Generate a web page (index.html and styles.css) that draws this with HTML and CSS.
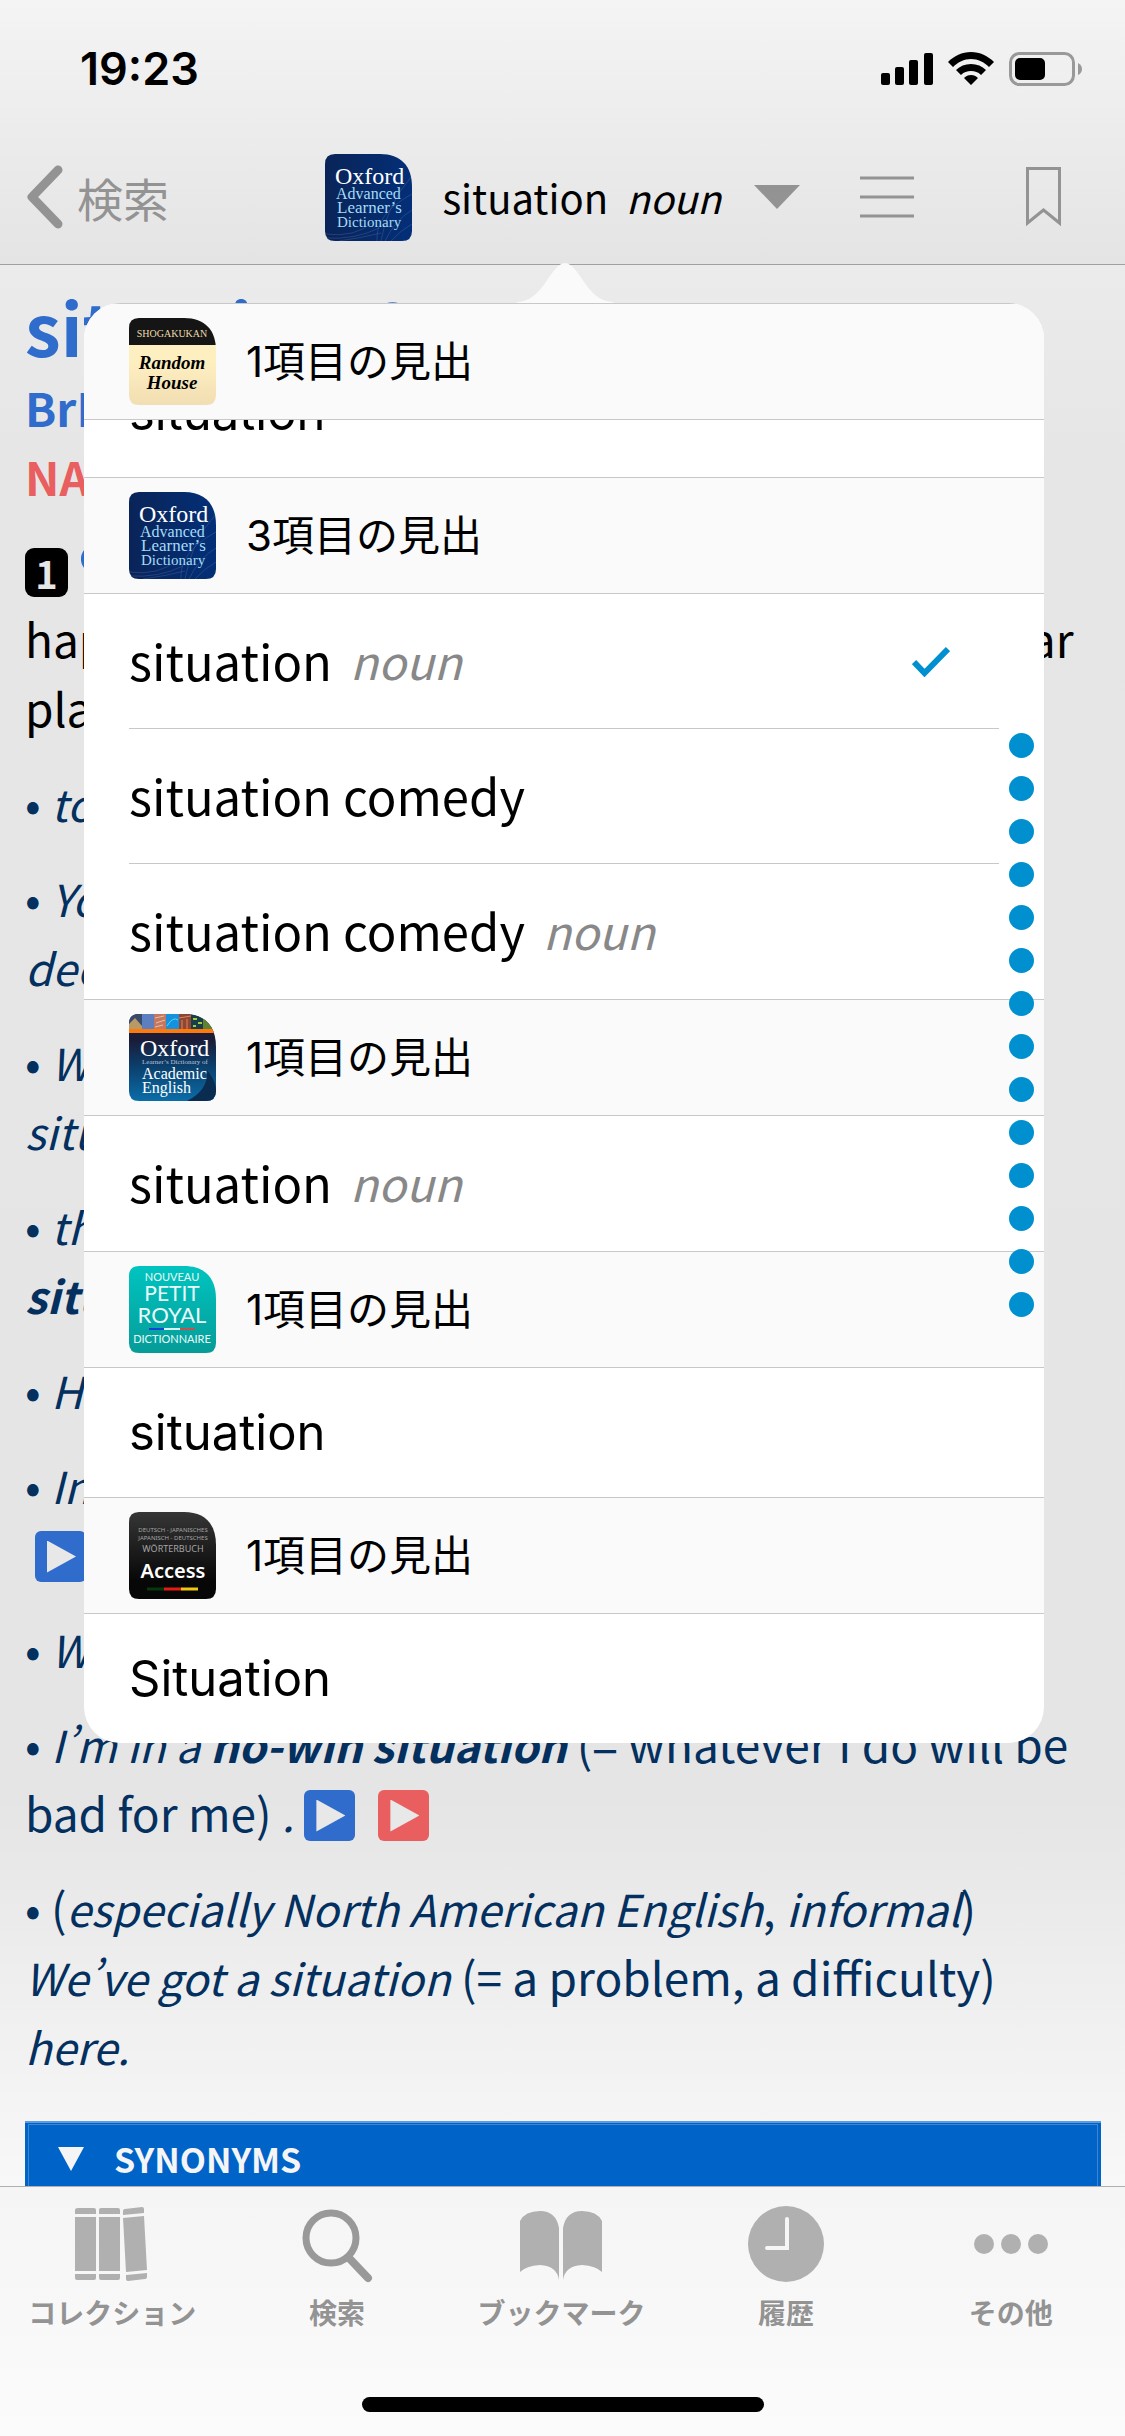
FILE: index.html
```html
<!DOCTYPE html>
<html lang="ja">
<head>
<meta charset="utf-8">
<meta name="viewport" content="width=device-width, initial-scale=1">
<title>situation</title>
<link rel="stylesheet" href="styles.css">
</head>
<body>
<svg class="defs" width="0" height="0" aria-hidden="true">
  <defs>
    <linearGradient id="g-oald" x1="0" y1="0" x2="1" y2="0"><stop offset="0" stop-color="#0a2458"/><stop offset="1" stop-color="#032f78"/></linearGradient>
    <linearGradient id="g-cream" x1="0" y1="0" x2="0" y2="1"><stop offset="0.5" stop-color="#feefc1"/><stop offset="1" stop-color="#f1deb2"/></linearGradient>
    <linearGradient id="g-acad" x1="0" y1="0" x2="0" y2="1"><stop offset="0.3" stop-color="#1a1c38"/><stop offset="0.6" stop-color="#0b3f6c"/><stop offset="1" stop-color="#0b6da8"/></linearGradient>
    <linearGradient id="g-teal" x1="0" y1="0" x2="0" y2="1"><stop offset="0" stop-color="#00c4c0"/><stop offset="1" stop-color="#069c98"/></linearGradient>
    <linearGradient id="g-dark" x1="0" y1="0" x2="0" y2="1"><stop offset="0" stop-color="#363636"/><stop offset="0.8" stop-color="#070707"/></linearGradient>
    <clipPath id="book"><path d="M10 0H55C76 0 87 12 87 33V77Q87 87 77 87H10Q0 87 0 77V10Q0 0 10 0Z"/></clipPath>
    <symbol id="oald" viewBox="0 0 87 87">
      <g clip-path="url(#book)">
        <rect width="87" height="87" fill="url(#g-oald)"/>
        <path d="M56 87Q62 50 87 22M52 87Q50 60 87 40M60 87Q70 66 87 56M66 87Q76 76 87 70M0 80Q30 84 48 68M0 84Q30 86 54 74M14 87Q36 84 56 79" fill="none" stroke="#5676b4" stroke-opacity="0.35"/>
        <g font-family="Liberation Serif, serif">
          <text x="10" y="30" font-size="24" fill="#fff">Oxford</text>
          <g fill="#a5dcf5"><text x="11" y="45" font-size="16">Advanced</text><text x="12" y="59" font-size="17">Learner’s</text><text x="12" y="73" font-size="15">Dictionary</text></g>
        </g>
      </g>
    </symbol>
    <symbol id="key" viewBox="0 0 58 28">
      <path fill="#2f6ccc" fill-rule="evenodd" d="M14 0A14 14 0 1 0 27 19H38V26H44V19H49V26H55V10H27A14 14 0 0 0 14 0ZM14 9A5 5 0 1 1 14 19A5 5 0 1 1 14 9Z"/>
    </symbol>
  </defs>
</svg>

<div class="app">
  <header class="top">
    <div class="status">
      <span class="clock">19:23</span>
      <span class="signals">
        <svg width="52" height="34" viewBox="0 0 52 34"><rect y="21" width="9" height="12" rx="2"/><rect x="14" y="15" width="9" height="18" rx="2"/><rect x="28" y="8" width="9" height="25" rx="2"/><rect x="43" y="1" width="9" height="32" rx="2"/></svg>
        <svg width="46" height="34" viewBox="0 0 46 34"><path d="M23 0C32 0 40 4 46 10L41 15C36 10 30 7 23 7S10 10 5 15L0 10C6 4 14 0 23 0ZM23 12C29 12 34 14 38 18L33 23C30 20 27 19 23 19S16 20 13 23L8 18C12 14 17 12 23 12ZM23 23C26 23 28 24 30 26L23 33L16 26C18 24 20 23 23 23Z"/></svg>
        <svg width="74" height="34" viewBox="0 0 74 34"><rect x="1.500" y="1.500" width="63" height="31" rx="9" fill="none" stroke="#999" stroke-width="3"/><rect x="6" y="6" width="30" height="22" rx="5"/><path d="M69 11Q73 13 73 17T69 23Z" fill="#999"/></svg>
      </span>
    </div>
    <nav class="bar">
      <a class="back" href="#search"><svg width="37" height="64" viewBox="0 0 37 64"><path d="M32 5L6 32L32 59" fill="none" stroke="#939393" stroke-width="9" stroke-linecap="round" stroke-linejoin="round"/></svg><span>検索</span></a>
      <button class="heading" type="button">
        <svg class="dict" width="87" height="87"><use href="#oald"/></svg>
        <span class="word">situation</span><i class="pos">noun</i>
        <svg class="tri" width="46" height="24" viewBox="0 0 46 24"><path d="M0 0H46L23 24Z" fill="#939393"/></svg>
      </button>
      <button class="menu" type="button" aria-label="目次"><svg width="54" height="42" viewBox="0 0 54 42"><path d="M0 2H54M0 21H54M0 40H54" stroke="#939393" stroke-width="3"/></svg></button>
      <button class="mark" type="button" aria-label="ブックマークに追加"><svg width="35" height="60" viewBox="0 0 35 60"><path d="M1.500 1.500H33.500V56L17.500 43L1.500 56Z" fill="none" stroke="#939393" stroke-width="3"/></svg></button>
    </nav>
  </header>

  <main class="content">
    <article class="entry">
      <h1>situation <svg width="82" height="40"><use href="#key"/></svg></h1>
      <p class="uk">BrE</p>
      <p class="us">NAmE</p>
      <p class="sense"><span class="num">1</span><svg width="58" height="28"><use href="#key"/></svg> all the circumstances and things that are<br>happening at a particular time and in a particular<br>place</p>
      <p class="ex">• <i>to be in the same situation</i></p>
      <p class="ex">• <i>You could get into a situation where you have to<br>decide immediately.</i></p>
      <p class="ex">• <i>We have all been in similar embarrassing<br>situations.</i></p>
      <p class="ex">• <i>the present economic/political<br><b>situation</b></i></p>
      <p class="ex">• <i>He could see no way out of the situation.</i></p>
      <p class="ex">• <i>In your situation, I would look for another job.</i><br><button class="play uk-play first" type="button" aria-label="BrE"></button></p>
      <p class="ex">• <i>What we have here is a crisis situation.</i></p>
      <p class="ex">• <i>I’m in a <b>no-win situation</b></i> (= whatever I do will be<br>bad for me) <i>.</i> <button class="play uk-play" type="button" aria-label="BrE"></button><button class="play us-play" type="button" aria-label="NAmE"></button></p>
      <p class="ex">• (<i>especially North American English</i>, <i>informal</i>)<br><i>We’ve got a situation</i> (= a problem, a difficulty)<br><i>here.</i></p>
      <button class="synonyms" type="button"><svg width="26" height="24" viewBox="0 0 26 24"><path d="M0 0H26L13 24Z" fill="#f5f5f5"/></svg>SYNONYMS</button>
    </article>

    <section class="popover">
      <svg class="arrow" width="96" height="40" viewBox="0 0 96 40"><path d="M0 39C26 39 34 0 48 0S70 39 96 39V40H0Z" fill="#fafafa"/></svg>
      <div class="list">
        <h2><svg class="dict" width="87" height="87" viewBox="0 0 87 87"><g clip-path="url(#book)"><rect width="87" height="87" fill="url(#g-cream)"/><rect width="87" height="27" fill="#151515"/><g font-family="Liberation Serif, serif" text-anchor="middle"><text x="43" y="19" font-size="10" fill="#eedcae">SHOGAKUKAN</text><g font-size="19" font-weight="700" font-style="italic"><text x="43" y="51">Random</text><text x="43" y="71">House</text></g></g></g></svg><span>1項目の見出</span></h2>
        <a class="row sys scrolled" href="#rh">situation</a>
        <h2><svg class="dict" width="87" height="87"><use href="#oald"/></svg><span>3項目の見出</span></h2>
        <a class="row inset" href="#o1">situation<i>noun</i><svg class="check" width="38" height="31" viewBox="0 0 38 31"><path d="M2 16L12.500 27L36 3" fill="none" stroke="#0090d0" stroke-width="6"/></svg></a>
        <a class="row inset" href="#o2">situation comedy</a>
        <a class="row" href="#o3">situation comedy<i>noun</i></a>
        <h2><svg class="dict" width="87" height="87" viewBox="0 0 87 87"><g clip-path="url(#book)"><rect width="87" height="87" fill="url(#g-acad)"/><path d="M58 87Q80 76 78 56Q90 70 87 87Z" fill="#0a2c50"/><rect width="13" height="15" fill="#3a4a6c"/><path d="M0 15V10L6 4L13 12V15Z" fill="#b99a67"/><rect x="13" width="12" height="15" fill="#5d7fc0"/><rect x="25" width="12" height="15" fill="#c47860"/><path d="M26 4L35 2M27 9L36 6M26 13L34 11" stroke="#e9c0a8" stroke-width="1"/><rect x="37" width="13" height="15" fill="#1592dd"/><path d="M38 12Q44 2 49 6" stroke="#5fd0fa" stroke-width="1" fill="none"/><rect x="50" width="12" height="15" fill="#8f4633"/><path d="M50 4L62 2M53 6V15M58 5V15" stroke="#d98a59" stroke-width="1"/><rect x="62" width="12" height="15" fill="#173f4b"/><path d="M64 5H68M69 9H73M64 12H67" stroke="#a8c93c" stroke-width="2"/><rect x="74" width="13" height="15" fill="#5f8234"/><rect y="15" width="87" height="4" fill="#ff7a0c"/><g font-family="Liberation Serif, serif" fill="#fff"><text x="11" y="42" font-size="24">Oxford</text><text x="13" y="50" font-size="7" fill="#b7c5dc">Learner’s Dictionary of</text><text x="13" y="65" font-size="16">Academic</text><text x="13" y="79" font-size="16">English</text></g></g></svg><span>1項目の見出</span></h2>
        <a class="row" href="#a1">situation<i>noun</i></a>
        <h2><svg class="dict" width="87" height="87" viewBox="0 0 87 87"><g clip-path="url(#book)"><rect width="87" height="87" fill="url(#g-teal)"/><g font-family="Lato, sans-serif" fill="#e9fbfa" text-anchor="middle"><text x="43" y="15" font-size="11">NOUVEAU</text><text x="43" y="35" font-size="21">PETIT</text><text x="43" y="57" font-size="22">ROYAL</text><text x="43" y="77" font-size="11">DICTIONNAIRE</text></g><path d="M20 63H35" stroke="#1543d8" stroke-width="2"/><path d="M35 63H51" stroke="#d9f2ef" stroke-width="2"/><path d="M51 63H66" stroke="#c4514d" stroke-width="2"/></g></svg><span>1項目の見出</span></h2>
        <a class="row sys" href="#p1">situation</a>
        <h2><svg class="dict" width="87" height="87" viewBox="0 0 87 87"><g clip-path="url(#book)"><rect width="87" height="87" fill="url(#g-dark)"/><g font-family="Noto Sans, sans-serif" fill="#a5a5a5" text-anchor="middle"><text x="44" y="20" font-size="6">DEUTSCH - JAPANISCHES</text><text x="44" y="28" font-size="6">JAPANISCH - DEUTSCHES</text><text x="44" y="40" font-size="9">WÖRTERBUCH</text><text x="44" y="66" font-size="20" font-weight="600" fill="#fff">Access</text></g><path d="M18 77H35" stroke="#06380d" stroke-width="3"/><path d="M35 77H52" stroke="#e41b10" stroke-width="3"/><path d="M52 77H69" stroke="#edc711" stroke-width="3"/></g></svg><span>1項目の見出</span></h2>
        <a class="row sys" href="#d1">Situation</a>
      </div>
      <div class="index" aria-hidden="true"><span></span><span></span><span></span><span></span><span></span><span></span><span></span><span></span><span></span><span></span><span></span><span></span><span></span><span></span></div>
    </section>
  </main>

  <footer class="bottom">
    <nav class="tabs">
      <a href="#collection"><svg width="74" height="78" viewBox="0 0 74 78" fill="#b0b0b0"><path d="M3 2H19Q21 2 21 4V8H0V4Q0 2 3 2ZM0 11H21V65H0ZM0 68H21V72Q21 74 19 74H3Q0 74 0 72ZM27 2H43Q45 2 45 4V8H24V4Q24 2 26 2ZM24 11H45V65H24ZM24 68H45V72Q45 74 43 74H26Q24 74 24 72ZM50 3L67 1Q69 1 69 3V7L48 9V5Q48 3 50 3ZM48 12L69 10L72 64L51 66ZM51 69L72 67V71Q72 73 70 73L53 75Q51 75 51 73Z"/></svg><span>コレクション</span></a>
      <a href="#search"><svg width="74" height="78" viewBox="0 0 74 78" fill="none" stroke="#999"><circle cx="31" cy="32" r="25" stroke-width="7"/><path d="M49 52L68 72" stroke-width="8" stroke-linecap="round"/></svg><span>検索</span></a>
      <a href="#bookmarks"><svg width="82" height="78" viewBox="0 0 82 78" fill="#b0b0b0"><path d="M39 74Q37 60 20 59Q6 60 0 66V15Q5 5 20 5Q36 5 39 22ZM43 74Q45 60 62 59Q76 60 82 66V15Q77 5 62 5Q46 5 43 22Z"/></svg><span>ブックマーク</span></a>
      <a href="#history"><svg width="76" height="78" viewBox="0 0 76 78"><circle cx="38" cy="38" r="38" fill="#b0b0b0"/><path d="M39 13V42H19" fill="none" stroke="#f6f6f6" stroke-width="4" stroke-linecap="round"/></svg><span>履歴</span></a>
      <a href="#more"><svg width="74" height="78" viewBox="0 0 74 78" fill="#b0b0b0"><circle cx="10" cy="38" r="10"/><circle cx="37" cy="38" r="10"/><circle cx="64" cy="38" r="10"/></svg><span>その他</span></a>
    </nav>
    <div class="home"></div>
  </footer>
</div>
</body>
</html>
```

FILE: styles.css
```css
* {
  box-sizing: border-box;
}

body {
  margin: 0;
  background: #e6e6e6;
  color: #000;
  font-family: "Noto Sans CJK JP", sans-serif;
}

svg {
  display: block;
  flex: none;
}

a {
  color: inherit;
  text-decoration: none;
}

button {
  margin: 0;
  padding: 0;
  border: 0;
  background: none;
  color: inherit;
  font: inherit;
}

h1,
h2,
p {
  margin: 0;
  font-weight: 400;
}

.defs {
  position: absolute;
}

.app {
  display: flex;
  flex-direction: column;
  height: 100vh;
}

/* Status and navigation bars */
.top {
  flex: none;
  border-bottom: 1px solid #a0a0a0;
  background: linear-gradient(#f4f4f4, #e4e4e4);
}

.status {
  display: flex;
  align-items: center;
  justify-content: space-between;
  height: 138px;
  padding: 0 42px 0 80px;
}

.clock {
  font: 600 45px/54px Inter, sans-serif;
}

.signals {
  display: flex;
  gap: 15px;
}

.bar {
  display: flex;
  align-items: center;
  height: 126px;
  padding: 0 64px 8px 26px;
}

.back {
  display: flex;
  align-items: center;
  gap: 14px;
  color: #939393;
  font-size: 46px;
  line-height: 60px;
}

.heading {
  display: flex;
  align-items: center;
  margin-left: auto;
  font-size: 40px;
  line-height: 58px;
}

.heading .word {
  margin-left: 30px;
}

.heading .pos {
  margin-left: 18px;
  font-size: 39px;
}

.heading .tri {
  margin-left: 33px;
}

.menu {
  margin-left: 60px;
}

.mark {
  margin-left: 112px;
}

/* Dictionary entry */
.content {
  position: relative;
  flex: 1;
  min-height: 0;
  background: linear-gradient(#ebebeb, #e6e6e6 10%, #e5e5e5 80%, #ededed 88%, #f8f8f8);
}

.entry {
  height: 100%;
  overflow: hidden;
  padding: 13px 24px 0 25px;
  font-size: 46px;
  line-height: 69px;
  white-space: nowrap;
}

.entry h1 {
  display: flex;
  align-items: center;
  gap: 30px;
  color: #2f6ccc;
  font-size: 72px;
  font-weight: 700;
  line-height: 95px;
}

.entry h1 svg {
  align-self: flex-start;
  margin-top: 24px;
}

.uk,
.us {
  color: #2f6ccc;
  font-weight: 700;
}

.us {
  color: #e95f5f;
}

.sense {
  margin-top: 24px;
}

.sense svg {
  display: inline-block;
  margin-left: 13px;
  vertical-align: 16px;
}

.num {
  display: inline-block;
  width: 43px;
  border-radius: 9px;
  background: #000;
  color: #e6e6e6;
  font-size: 38px;
  font-weight: 700;
  line-height: 49px;
  text-align: center;
}

.ex {
  margin-top: 26px;
  color: #03305f;
}

.entry i {
  font-size: 44px;
  line-height: 1;
}

.entry b {
  font-size: 44px;
}

.play {
  width: 51px;
  height: 51px;
  margin-right: 23px;
  border-radius: 6px;
  vertical-align: -9px;
}

.play::before {
  content: "";
  display: block;
  width: 29px;
  height: 32px;
  margin-left: 12px;
  background: #e8e8e8;
  clip-path: polygon(0 0, 100% 50%, 0 100%);
}

.play.first {
  margin-left: 10px;
}

.uk-play {
  background: #2f6ccc;
}

.us-play {
  background: #e95f5f;
}

.synonyms {
  display: flex;
  align-items: center;
  gap: 30px;
  width: 100%;
  height: 74px;
  margin-top: 41px;
  padding-left: 33px;
  border-top: 2px solid #5d9be0;
  outline: 1px solid #3d86d6;
  outline-offset: -4px;
  background: #0063c8;
  color: #f5f5f5;
  font-size: 34px;
  font-weight: 700;
  line-height: 50px;
}

/* Headword list */
.popover {
  position: absolute;
  top: 38px;
  right: 81px;
  left: 84px;
}

.arrow {
  position: absolute;
  bottom: 100%;
  left: 50%;
  margin-left: -47px;
}

.list {
  overflow: hidden;
  border-radius: 36px;
  background: #fff;
}

.list h2 {
  position: relative;
  display: flex;
  align-items: center;
  gap: 30px;
  height: 117px;
  padding-left: 45px;
  border: solid #c8c8c8;
  border-width: 1px 0;
  background: #fafafa;
  font-family: Inter, "Noto Sans CJK JP", sans-serif;
  font-size: 42px;
}

.list h2 span {
  padding-bottom: 6px;
}

.row {
  display: flex;
  align-items: center;
  height: 135px;
  padding: 0 94px 4px 45px;
  font-size: 49px;
}

.row i {
  margin-left: 18px;
  color: #888;
  font-size: 46px;
}

.sys {
  height: 129px;
  padding-bottom: 0;
  font-family: Inter, sans-serif;
}

.scrolled {
  margin-top: -72px;
}

.inset {
  position: relative;
}

.inset::after {
  content: "";
  position: absolute;
  right: 45px;
  bottom: 0;
  left: 45px;
  height: 1px;
  background: #c8c8c8;
}

.check {
  margin-top: 4px;
  margin-left: auto;
}

.index {
  position: absolute;
  top: 430px;
  right: 10px;
  display: grid;
  gap: 18px;
}

.index span {
  width: 25px;
  height: 25px;
  border-radius: 50%;
  background: #0090d0;
}

/* Tab bar */
.bottom {
  position: relative;
  flex: none;
  border-top: 1px solid #b0b0b0;
  background: linear-gradient(#f5f5f5, #fbfbfb);
}

.tabs {
  display: grid;
  grid-template-columns: repeat(5, 1fr);
  padding: 19px 2px 0 0;
}

.tabs a {
  display: flex;
  flex-direction: column;
  align-items: center;
  gap: 7px;
  color: #939393;
  font-size: 28px;
  font-weight: 700;
  line-height: 42px;
}

.home {
  width: 402px;
  height: 15px;
  margin: 64px auto 24px;
  border-radius: 8px;
  background: #000;
}
```
